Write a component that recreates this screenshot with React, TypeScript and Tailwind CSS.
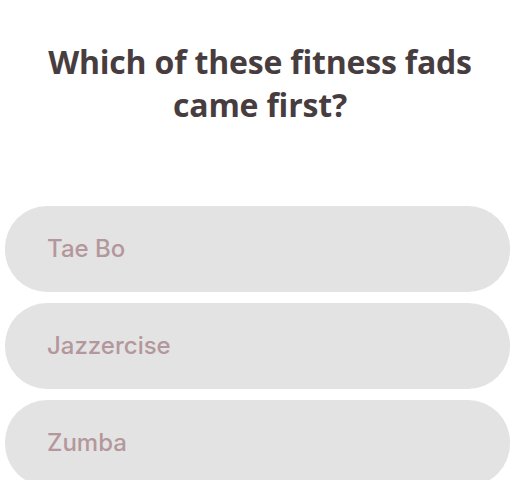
import React from 'react';

const options = ['Tae Bo', 'Jazzercise', 'Zumba'];

export default function App() {
  return (
    <div className="w-[520px] h-[480px] overflow-hidden bg-white" style={{ fontFamily: '"Open Sans", sans-serif' }}>
      <h1 className="pt-[40px] px-6 text-center text-[32px] leading-[43px] font-bold tracking-[-0.2px] text-[#483d3e]">
        Which of these fitness fads came first?
      </h1>
      <div className="mt-[80px] flex flex-col gap-[11px] pl-[5px] pr-[10px]">
        {options.map((opt) => (
          <div
            key={opt}
            className="h-[86px] shrink-0 rounded-[42px] bg-[#e3e3e3] flex items-center pl-[42px] text-[24px] font-medium text-[#b4979c] font-[Inter,sans-serif]"
          >
            {opt}
          </div>
        ))}
      </div>
    </div>
  );
}
